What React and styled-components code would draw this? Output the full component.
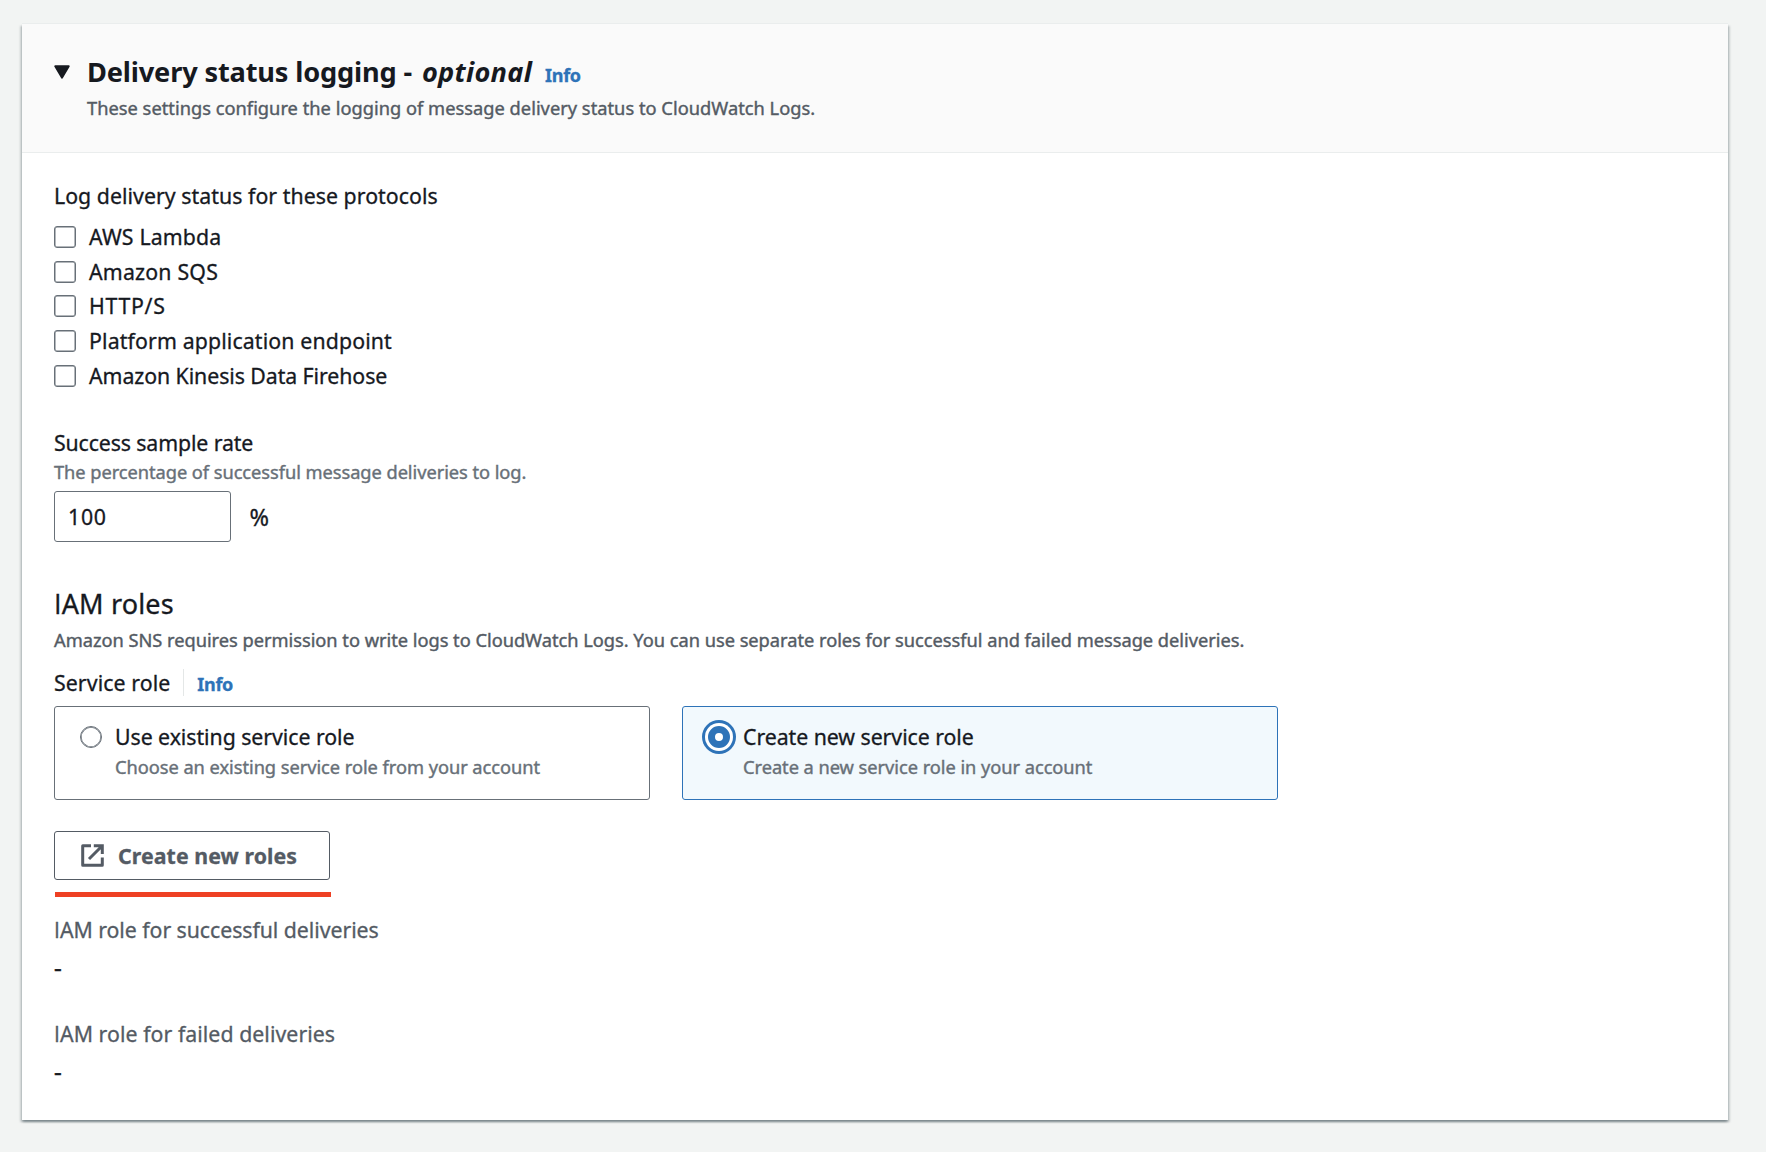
import React, { useState } from 'react';
import styled, { createGlobalStyle, css } from 'styled-components';

const GlobalStyle = createGlobalStyle`
  *, *::before, *::after { box-sizing: border-box; }
  body {
    margin: 0;
    background: #f2f4f3;
    color: #16191f;
    font-family: "Noto Sans", "Open Sans", sans-serif;
    font-size: 21.3px;
    line-height: 34px;
  }
  h2, h3, p, dl, dt, dd, ul { margin: 0; padding: 0; font-weight: 400; }
`;

const Page = styled.main`
  min-height: 1152px;
  padding: 24px 38px 32px 22px;
`;

const Card = styled.section`
  height: 1096px;
  background: #fff;
  box-shadow:
    0 -1px 0 #eaeded,
    0 2px 2px rgba(0, 28, 36, 0.3),
    2px 2px 2px rgba(0, 28, 36, 0.15),
    -2px 2px 2px rgba(0, 28, 36, 0.15);
`;

const CardHeader = styled.header`
  display: flex;
  height: 129px;
  padding: 30px 32px 0;
  background: #fafafa;
  border-bottom: 1px solid #eaeded;
`;

const Caret = styled.svg`
  flex: none;
  width: 16px;
  height: 14px;
  margin: 11px 17px 0 0;
`;

const TitleRow = styled.div`
  display: flex;
  align-items: baseline;
  height: 35px;
`;

const Title = styled.h2`
  font-size: 27.2px;
  font-weight: 700;
  line-height: 35px;
  letter-spacing: -0.16px;
  i {
    margin-left: 3px;
    letter-spacing: 0.28px;
  }
`;

const InfoLink = styled.a`
  color: #2e73b8;
  font-size: 18px;
  font-weight: 700;
  letter-spacing: -0.3px;
  text-decoration: none;
  -webkit-text-stroke: 0.3px currentColor;
`;

const TitleInfo = styled(InfoLink)`
  margin-left: 13px;
`;

const Text = styled.span`
  letter-spacing: ${(p) => p.$spacing || 0}px;
`;

const Small = styled.p`
  font-size: 18.25px;
  line-height: 25px;
  color: ${(p) => (p.$muted ? '#687078' : '#545b64')};
  letter-spacing: ${(p) => p.$spacing || 0}px;
  -webkit-text-stroke: 0.4px currentColor;
  white-space: nowrap;
`;

const HeaderText = styled(Small)`
  margin-top: 6px;
`;

const Content = styled.div`
  padding: 26px 32px 0;
  -webkit-text-stroke: 0.3px currentColor;
`;

const Options = styled.ul`
  margin-top: 6.5px;
  list-style: none;
`;

const Option = styled.li`
  height: 34.7px;
`;

const OptionLabel = styled.label`
  display: inline-flex;
  align-items: center;
  gap: 13px;
  height: 34.7px;
  line-height: 34.7px;
`;

const OptionText = styled(Text)`
  padding-top: 1px;
`;

const Checkbox = styled.input.attrs({ type: 'checkbox' })`
  appearance: none;
  width: 22px;
  height: 22px;
  margin: 0;
  background: #fff;
  border: 1px solid #687078;
  border-radius: 3px;
  box-shadow: inset 0 0 0 0.5px #687078;
  &:checked { background: #2e73b8; border-color: #2e73b8; }
`;

const Field = styled.div`
  margin-top: 34px;
`;

const FieldLabel = styled.div`
  height: 31.5px;
  line-height: 32px;
`;

const FieldHint = styled(Small)`
  margin-top: 1px;
`;

const InputRow = styled.div`
  display: flex;
  align-items: center;
  gap: 18.5px;
  margin-top: 6.5px;
`;

const NumberInput = styled.input`
  width: 177px;
  height: 51px;
  padding: 0 13px;
  color: inherit;
  font: inherit;
  letter-spacing: 0.7px;
  -webkit-text-stroke: inherit;
  background: #fff;
  border: 1px solid #687078;
  border-radius: 3px;
`;

const Unit = styled.span`
  padding-top: 1px;
  font-size: 23.5px;
`;

const SectionTitle = styled.h3`
  height: 34px;
  margin-top: 44px;
  font-size: 27px;
  line-height: 36px;
  letter-spacing: 0.15px;
`;

const SectionText = styled(Small)`
  margin-top: 7px;
`;

/* Capital I without slab serifs */
const PlainI = styled.span`
  font-family: "Open Sans", sans-serif;
`;

const ServiceRow = styled.div`
  display: flex;
  align-items: baseline;
  height: 34px;
  margin-top: 14px;
`;

const Divider = styled.span`
  align-self: flex-start;
  width: 1px;
  height: 27px;
  margin: 3px 13px 0 13px;
  background: #e4e7e7;
`;

const Tiles = styled.div`
  display: grid;
  grid-template-columns: 596px 596px;
  gap: 32px;
  margin-top: 6px;
`;

const Tile = styled.label`
  display: flex;
  align-items: flex-start;
  gap: 13px;
  height: 94px;
  padding: 12px 25px;
  border: 1px solid #687078;
  border-radius: 3px;
  ${(p) => p.$selected && css`
    background: #f2f9fd;
    border-color: #2e73b8;
  `}
`;

const Radio = styled.input.attrs({ type: 'radio' })`
  appearance: none;
  flex: none;
  width: 22px;
  height: 22px;
  margin: 7px 0 0;
  background: #fff;
  border: 1px solid #687078;
  border-radius: 50%;
  box-shadow: inset 0 0 0 0.7px #687078;
  &:checked {
    border: 7px solid #2e73b8;
    box-shadow: 0 0 0 3px #fff, 0 0 0 6px #2e73b8;
  }
`;

const TileLabel = styled.div`
  padding-top: 1px;
  letter-spacing: -0.05px;
`;

const Button = styled.button`
  display: flex;
  align-items: center;
  gap: 14px;
  width: 276px;
  height: 49px;
  margin-top: 31px;
  padding: 1px 0 0 26px;
  color: #545b64;
  font: inherit;
  font-weight: 700;
  letter-spacing: 0.08px;
  -webkit-text-stroke: 0.3px currentColor;
  background: #fff;
  border: 1px solid #545b64;
  border-radius: 3px;
`;

const ExternalIcon = styled.svg`
  width: 23px;
  height: 23px;
`;

const Underline = styled.div`
  width: 276px;
  height: 5px;
  margin: 12px 0 16px 1px;
  background: #ee4023;
`;

const Roles = styled.dl`
  display: grid;
  gap: 32px;
`;

const RoleName = styled.dt`
  color: #545b64;
  letter-spacing: ${(p) => p.$spacing || 0}px;
`;

const RoleValue = styled.dd`
  height: 34px;
  margin-top: 4px;
  font-size: 24px;
  line-height: 32px;
  -webkit-text-stroke: 0.5px currentColor;
`;

const PROTOCOLS = [
  { name: 'AWS Lambda', spacing: 0.15 },
  { name: 'Amazon SQS', spacing: 0.2 },
  { name: 'HTTP/S', spacing: 0.7 },
  { name: 'Platform application endpoint', spacing: 0.13 },
  { name: 'Amazon Kinesis Data Firehose', spacing: -0.07 },
];

const ROLE_CHOICES = [
  { id: 'existing', label: 'Use existing service role', hint: 'Choose an existing service role from your account' },
  { id: 'new', label: 'Create new service role', hint: 'Create a new service role in your account' },
];

const ROLES = [
  { rest: 'AM role for successful deliveries', spacing: -0.05 },
  { rest: 'AM role for failed deliveries', spacing: 0.05 },
];

export default function App() {
  const [choice, setChoice] = useState('new');
  return (
    <>
      <GlobalStyle />
      <Page>
        <Card>
          <CardHeader>
            <Caret viewBox="0 0 16 14" aria-hidden="true">
              <path d="M1.2 1.2H14.8L8 12.8Z" fill="#16191f" stroke="#16191f" strokeWidth="1.8" strokeLinejoin="round" />
            </Caret>
            <div>
              <TitleRow>
                <Title>Delivery status logging - <i>optional</i></Title>
                <TitleInfo>Info</TitleInfo>
              </TitleRow>
              <HeaderText $spacing={0.02}>
                These settings configure the logging of message delivery status to CloudWatch Logs.
              </HeaderText>
            </div>
          </CardHeader>
          <Content>
            <div><Text $spacing={0.04}>Log delivery status for these protocols</Text></div>
            <Options>
              {PROTOCOLS.map(({ name, spacing }) => (
                <Option key={name}>
                  <OptionLabel>
                    <Checkbox />
                    <OptionText $spacing={spacing}>{name}</OptionText>
                  </OptionLabel>
                </Option>
              ))}
            </Options>

            <Field>
              <FieldLabel><Text $spacing={-0.12}>Success sample rate</Text></FieldLabel>
              <FieldHint $muted $spacing={-0.05}>The percentage of successful message deliveries to log.</FieldHint>
              <InputRow>
                <NumberInput defaultValue="100" />
                <Unit>%</Unit>
              </InputRow>
            </Field>

            <SectionTitle><PlainI>I</PlainI>AM roles</SectionTitle>
            <SectionText $spacing={-0.02}>
              Amazon SNS requires permission to write logs to CloudWatch Logs. You can use separate roles for successful and failed message deliveries.
            </SectionText>

            <ServiceRow>
              <Text $spacing={0.08}>Service role</Text>
              <Divider />
              <InfoLink>Info</InfoLink>
            </ServiceRow>
            <Tiles>
              {ROLE_CHOICES.map(({ id, label, hint }) => (
                <Tile key={id} $selected={choice === id}>
                  <Radio name="role" checked={choice === id} onChange={() => setChoice(id)} />
                  <div>
                    <TileLabel>{label}</TileLabel>
                    <Small $muted $spacing={-0.04}>{hint}</Small>
                  </div>
                </Tile>
              ))}
            </Tiles>

            <Button>
              <ExternalIcon viewBox="0 0 23 23" fill="none" stroke="#545b64" strokeWidth="3" aria-hidden="true">
                <path d="M10 1.7H1.7V21.3H21.3V13.5" strokeLinejoin="round" />
                <path d="M12.8 1.7H21.3V10M20.5 2.5L8 15" />
              </ExternalIcon>
              Create new roles
            </Button>
            <Underline />

            <Roles>
              {ROLES.map(({ rest, spacing }) => (
                <div key={rest}>
                  <RoleName $spacing={spacing}><PlainI>I</PlainI>{rest}</RoleName>
                  <RoleValue>-</RoleValue>
                </div>
              ))}
            </Roles>
          </Content>
        </Card>
      </Page>
    </>
  );
}
